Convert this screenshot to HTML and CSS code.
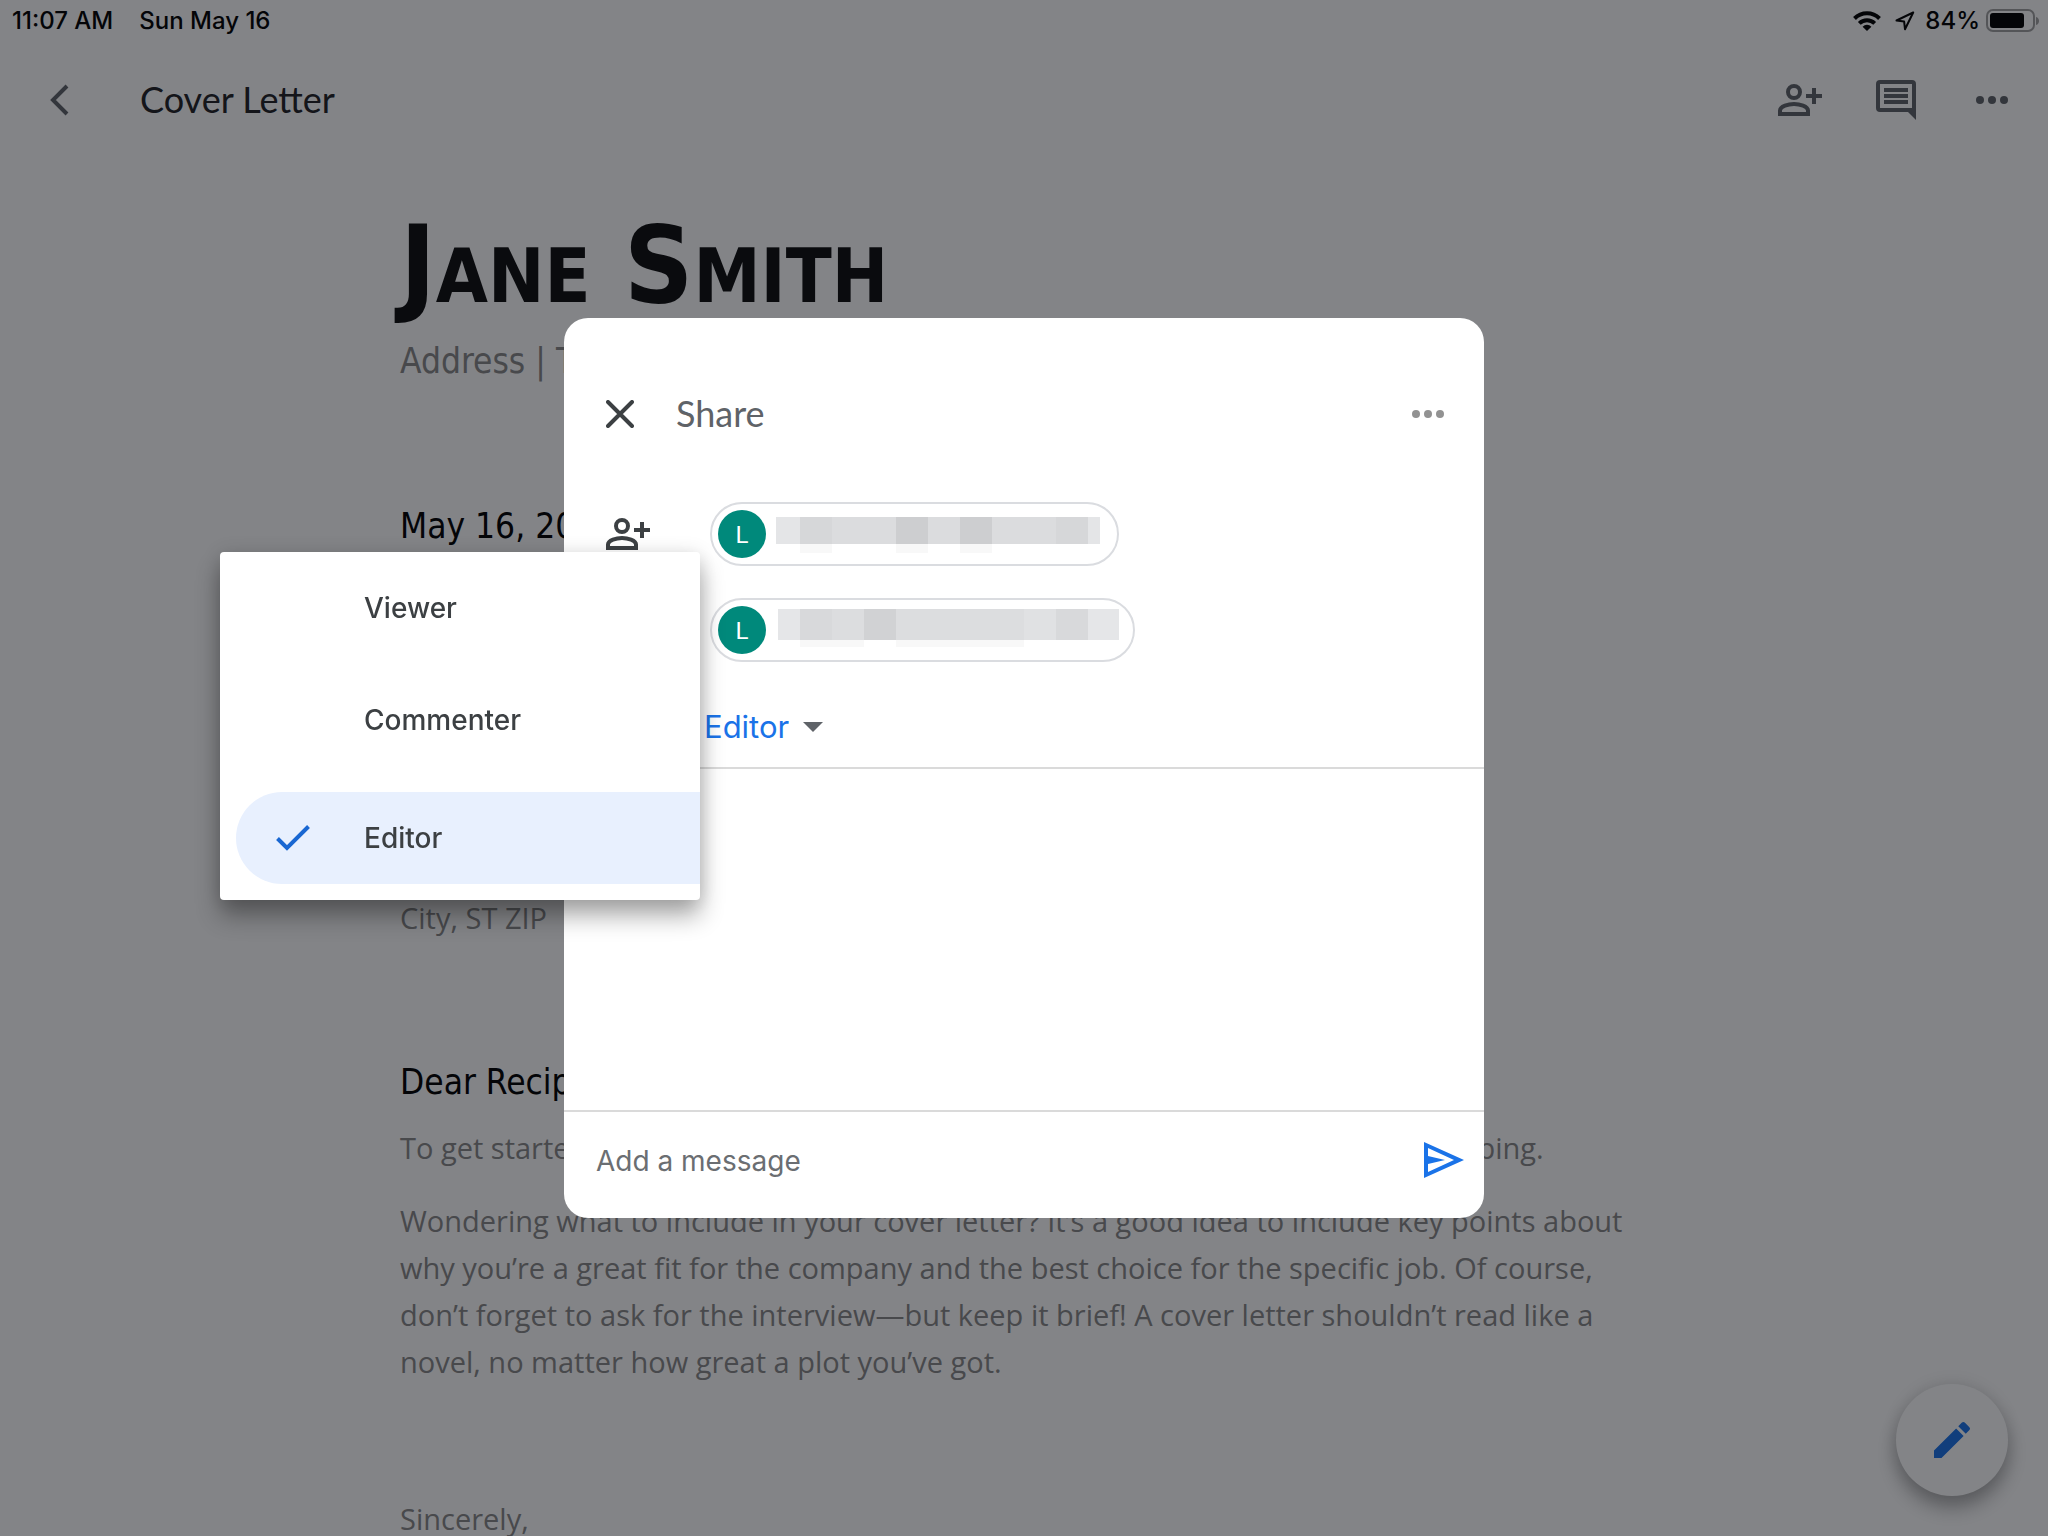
FILE: index.html
```html
<!DOCTYPE html>
<html lang="en">
<head>
<meta charset="utf-8">
<meta name="viewport" content="width=device-width, initial-scale=1">
<title>Cover Letter</title>
<link rel="stylesheet" href="styles.css">
</head>
<body>
<svg class="sprite" aria-hidden="true">
  <symbol id="person-add" viewBox="0 0 44 32">
    <g fill="none" stroke="currentColor" stroke-width="4">
      <circle cx="16" cy="8" r="6"/>
      <path d="M2 30v-3.500c0-4.300 8.500-6.500 14-6.500s14 2.200 14 6.500V30z"/>
      <path d="M36 4v16M28 12h16"/>
    </g>
  </symbol>
  <symbol id="more" viewBox="0 0 32 8">
    <g fill="currentColor"><circle cx="4" cy="4" r="4"/><circle cx="16" cy="4" r="4"/><circle cx="28" cy="4" r="4"/></g>
  </symbol>
</svg>

<div class="app">
  <div class="status">
    <div class="status-group status-left">
      <span>11:07 AM</span>
      <span>Sun May 16</span>
    </div>
    <div class="status-group status-right">
      <svg class="wifi" width="28" height="20" viewBox="0 0 28 20" aria-label="Wi-Fi">
        <g fill="none" stroke="currentColor" stroke-width="4">
          <path d="M1.500 7.500a17.800 17.800 0 0 1 25 0"/>
          <path d="M6.300 12.400a11 11 0 0 1 15.400 0"/>
        </g>
        <path d="M9.600 15.700a6.200 6.200 0 0 1 8.800 0L14 20z" fill="currentColor"/>
      </svg>
      <svg class="locate" width="20" height="20" viewBox="0 0 20 20" aria-label="Location">
        <path d="M18.200 1.500 1.500 9.500l7.600.900.900 7.800z" fill="none" stroke="currentColor" stroke-width="2" stroke-linejoin="round"/>
      </svg>
      <span>84%</span>
      <svg class="battery" width="54" height="24" viewBox="0 0 54 24" aria-label="Battery">
        <rect x="1" y="1" width="47" height="21" rx="6" fill="none" stroke="#a0a0a0" stroke-width="2"/>
        <rect x="4" y="4" width="34" height="15" rx="3" fill="currentColor"/>
        <path d="M50 8c4 1 4 7 0 8z" fill="#a0a0a0"/>
      </svg>
    </div>
  </div>

  <header class="toolbar">
    <button class="icon-button" aria-label="Back">
      <svg width="20" height="32" viewBox="0 0 20 32"><path d="M17 2 3 16l14 14" fill="none" stroke="currentColor" stroke-width="4"/></svg>
    </button>
    <span class="doc-name">Cover Letter</span>
    <div class="tools">
      <button class="icon-button" aria-label="Share"><svg width="44" height="32"><use href="#person-add"/></svg></button>
      <button class="icon-button" aria-label="Comments">
        <svg width="40" height="40" viewBox="0 0 40 40" fill="currentColor">
          <path fill-rule="evenodd" d="M4 0h32a4 4 0 0 1 4 4v36l-8-8H4a4 4 0 0 1-4-4V4a4 4 0 0 1 4-4zM4 4v24h32V4z"/>
          <path d="M8 8h24v4H8zM8 14h24v4H8zM8 20h24v4H8z"/>
        </svg>
      </button>
      <button class="icon-button overflow" aria-label="More"><svg width="32" height="8"><use href="#more"/></svg></button>
    </div>
  </header>

  <main class="letter">
    <h1>J<span>ane</span> S<span>mith</span></h1>
    <p class="contact">Address | Telephone | Email</p>
    <p class="date">May 16, 2021</p>
    <p class="recipient">Recipient Name<br>Title<br>Company<br>Address<br>City, ST ZIP</p>
    <p class="greeting">Dear Recipient:</p>
    <p>To get started right away, just tap any placeholder text (such as this) and start typing.</p>
    <p>Wondering what to include in your cover letter? It’s a good idea to include key points about why you’re a great fit for the company and the best choice for the specific job. Of course, don’t forget to ask for the interview—but keep it brief! A cover letter shouldn’t read like a novel, no matter how great a plot you’ve got.</p>
    <p class="closing">Sincerely,</p>
  </main>

  <button class="fab" aria-label="Edit">
    <svg width="48" height="48" viewBox="0 0 24 24" fill="currentColor"><path d="M3 17.250V21h3.750L17.810 9.940l-3.750-3.750L3 17.250zM20.710 7.040a1 1 0 0 0 0-1.410l-2.340-2.340a1 1 0 0 0-1.410 0l-1.830 1.830 3.750 3.750 1.830-1.830z"/></svg>
  </button>
</div>

<div class="scrim">
  <section class="dialog" role="dialog" aria-labelledby="share-title">
    <header class="dialog-head">
      <button class="icon-button close" aria-label="Close">
        <svg width="28" height="28" viewBox="0 0 28 28"><path d="M2 2l24 24M26 2 2 26" fill="none" stroke="currentColor" stroke-width="4" stroke-linecap="round"/></svg>
      </button>
      <h2 id="share-title">Share</h2>
      <button class="icon-button more" aria-label="More options"><svg width="32" height="8"><use href="#more"/></svg></button>
    </header>

    <div class="people">
      <svg class="people-icon" width="44" height="32"><use href="#person-add"/></svg>
      <div class="chips">
        <div class="chip">
          <span class="avatar">L</span>
          <svg width="329" height="48" viewBox="0 0 329 48" aria-hidden="true">
            <path fill="#e4e5e7" d="M2 7h24v27H2zM314 7h12v27h-12z"/>
            <path fill="#d6d7d9" d="M26 7h32v27H26zM282 7h32v27h-32z"/>
            <path fill="#dbdcde" d="M58 7h64v27H58zM154 7h32v27h-32zM218 7h64v27h-64z"/>
            <path fill="#cdced0" d="M122 7h32v27h-32zM186 7h32v27h-32z"/>
            <path fill="#f8f8f8" d="M26 34h32v9H26zM122 34h32v9h-32zM186 34h32v9h-32z"/>
          </svg>
        </div>
        <div class="chip">
          <span class="avatar">L</span>
          <svg width="345" height="48" viewBox="0 0 345 48" aria-hidden="true">
            <path fill="#e5e6e8" d="M4 3h22v31H4zM314 3h32v31h-32z"/>
            <path fill="#d8d9db" d="M26 3h32v31H26zM282 3h32v31h-32z"/>
            <path fill="#dcdddf" d="M58 3h32v31H58zM122 3h128v31H122z"/>
            <path fill="#d1d2d4" d="M90 3h32v31H90z"/>
            <path fill="#e0e1e3" d="M250 3h32v31h-32z"/>
            <path fill="#f8f8f8" d="M26 34h64v7H26zM122 34h128v7H122z"/>
          </svg>
        </div>
      </div>
    </div>

    <div class="role">
      <label class="visually-hidden" for="role">Access level</label>
      <select id="role">
        <option>Viewer</option>
        <option>Commenter</option>
        <option selected>Editor</option>
      </select>
      <svg width="20" height="10" viewBox="0 0 20 10" aria-hidden="true"><path d="M0 0h20L10 10z" fill="#5f6368"/></svg>
    </div>

    <form class="message">
      <input type="text" placeholder="Add a message" aria-label="Add a message">
      <button class="icon-button send" type="button" aria-label="Send">
        <svg width="40" height="36" viewBox="0 0 40 36"><path fill="currentColor" fill-rule="evenodd" d="M0 0l40 18L0 36zM4 6v8l17 4-17 4v8l26-12z"/></svg>
      </button>
    </form>

    <div class="menu" role="menu">
      <button class="menu-item" role="menuitemradio" aria-checked="false"><span>Viewer</span></button>
      <button class="menu-item" role="menuitemradio" aria-checked="false"><span>Commenter</span></button>
      <button class="menu-item selected" role="menuitemradio" aria-checked="true">
        <svg width="34" height="26" viewBox="0 0 34 26" aria-hidden="true"><path d="M1.500 13.500 11 23 32.500 1.500" fill="none" stroke="#1967d2" stroke-width="4"/></svg>
        <span>Editor</span>
      </button>
    </div>
  </section>
</div>
</body>
</html>
```
FILE: styles.css
```css
* { box-sizing: border-box; }

body {
  margin: 0;
  background: #fff;
  color: #202124;
  font-family: "Inter", "Liberation Sans", sans-serif;
}

h1, h2, p { margin: 0; }

svg { display: block; flex: none; }

.sprite { position: absolute; width: 0; height: 0; }

.visually-hidden {
  position: absolute;
  width: 1px;
  height: 1px;
  overflow: hidden;
  clip-path: inset(50%);
}

button, input, select {
  margin: 0;
  padding: 0;
  border: 0;
  background: none;
  color: inherit;
  font: inherit;
}

.icon-button { display: flex; color: #5f6368; }

.app {
  height: 100vh;
  overflow: hidden;
}

/* Status bar */
.status {
  display: flex;
  justify-content: space-between;
  height: 40px;
  padding: 1px 8px 0 12px;
  color: #000;
  font-size: 24px;
  font-weight: 500;
}

.status-group { display: flex; align-items: center; }
.status-left { gap: 26px; }
.status-right { gap: 6px; }
.wifi { margin-right: 8px; }
.locate { margin-right: 4px; }

/* Document toolbar */
.toolbar {
  display: flex;
  align-items: center;
  height: 120px;
  padding: 0 40px 0 50px;
}

.doc-name {
  margin-left: 70px;
  padding-bottom: 3px;
  font-family: Lato, sans-serif;
  font-size: 36px;
}

.tools {
  display: flex;
  align-items: center;
  gap: 54px;
  margin-left: auto;
}

.overflow { margin-left: 6px; }

/* Letter */
.letter {
  padding: 45px 400px 0;
  color: #888;
  font-family: "Open Sans", "Noto Sans", sans-serif;
  font-size: 29px;
  line-height: 47px;
}

.letter h1 {
  color: #0c0c0c;
  font-family: "DejaVu Sans Condensed", "DejaVu Sans", sans-serif;
  font-size: 107px;
  line-height: 120px;
}

.letter h1 span {
  font-size: 75px;
  line-height: 1;
  text-transform: uppercase;
}

.letter p + p { margin-top: 26px; }

.letter .contact, .letter .date, .letter .greeting {
  font-family: "DejaVu Sans Condensed", "DejaVu Sans", sans-serif;
  font-size: 35px;
  line-height: 48px;
}

.letter .date, .letter .greeting { color: #000; }

.letter .contact { margin-top: 12px; }
.letter .date { margin-top: 117px; }
.letter .recipient { margin-top: 156px; }
.letter .greeting { margin-top: 117px; }
.letter .greeting + p { margin-top: 18px; }
.letter .closing { margin-top: 110px; }

.fab {
  position: fixed;
  right: 40px;
  bottom: 40px;
  display: flex;
  align-items: center;
  justify-content: center;
  width: 112px;
  height: 112px;
  border-radius: 50%;
  background: #fff;
  box-shadow: 0 12px 20px rgba(0, 0, 0, .3), 0 0 20px rgba(0, 0, 0, .12);
  color: #1a73e8;
}

/* Share dialog */
.scrim {
  position: fixed;
  inset: 0;
  display: flex;
  align-items: center;
  justify-content: center;
  background: rgba(8, 10, 16, .5);
}

.dialog {
  position: relative;
  display: flex;
  flex-direction: column;
  width: 920px;
  min-height: 900px;
  padding-top: 40px;
  border-radius: 24px;
  background: #fff;
}

.dialog-head {
  display: flex;
  align-items: center;
  height: 112px;
  padding: 0 40px 0 42px;
}

.dialog-head h2 {
  margin-left: 42px;
  padding-bottom: 3px;
  color: #5f6368;
  font-family: Lato, sans-serif;
  font-size: 36px;
  font-weight: 400;
}

.close { color: #3c4043; }
.more { margin-left: auto; color: #929292; }

.people {
  display: flex;
  gap: 60px;
  padding: 32px 42px 0;
}

.people-icon { margin-top: 16px; color: #3c4043; }

.chips {
  display: flex;
  flex-direction: column;
  align-items: flex-start;
  gap: 32px;
}

.chip {
  display: flex;
  align-items: center;
  gap: 8px;
  height: 64px;
  padding: 0 14px 0 6px;
  border: 2px solid #dadce0;
  border-radius: 32px;
}

.avatar {
  display: flex;
  align-items: center;
  justify-content: center;
  width: 48px;
  height: 48px;
  padding-top: 2px;
  border-radius: 50%;
  background: #00897b;
  color: #fff;
  font-family: Roboto, sans-serif;
  font-size: 24px;
}

.role {
  display: flex;
  align-items: center;
  gap: 14px;
  height: 83px;
  margin-top: 24px;
  padding-left: 140px;
  border-bottom: 2px solid #dadada;
}

.role select {
  appearance: none;
  field-sizing: content;
  color: #1a73e8;
  font-size: 31px;
}

.message {
  display: flex;
  align-items: center;
  height: 108px;
  margin-top: auto;
  padding: 0 20px 10px 32px;
  border-top: 2px solid #dadada;
}

.message input {
  flex: 1;
  padding-top: 2px;
  outline: none;
  font-size: 28px;
}

.message input::placeholder { color: #6b6e72; opacity: 1; }

.send { color: #1a73e8; }

/* Access level menu, opened over the dialog's edge */
.menu {
  position: absolute;
  top: 234px;
  left: -344px;
  display: flex;
  flex-direction: column;
  width: 480px;
  padding-bottom: 16px;
  border-radius: 4px;
  background: #fff;
  box-shadow: 0 16px 24px rgba(0, 0, 0, .32), 0 2px 20px rgba(0, 0, 0, .14);
}

.menu-item {
  display: grid;
  grid-template-columns: 88px 1fr;
  align-items: center;
  height: 112px;
  margin-left: 16px;
  padding-left: 40px;
  color: #3c4043;
  font-size: 28px;
  font-weight: 500;
  text-align: left;
}

.menu-item span { grid-column: 2; }

.menu-item.selected {
  height: 92px;
  margin-top: 16px;
  border-radius: 46px 0 0 46px;
  background: #e8f0fe;
}
```
